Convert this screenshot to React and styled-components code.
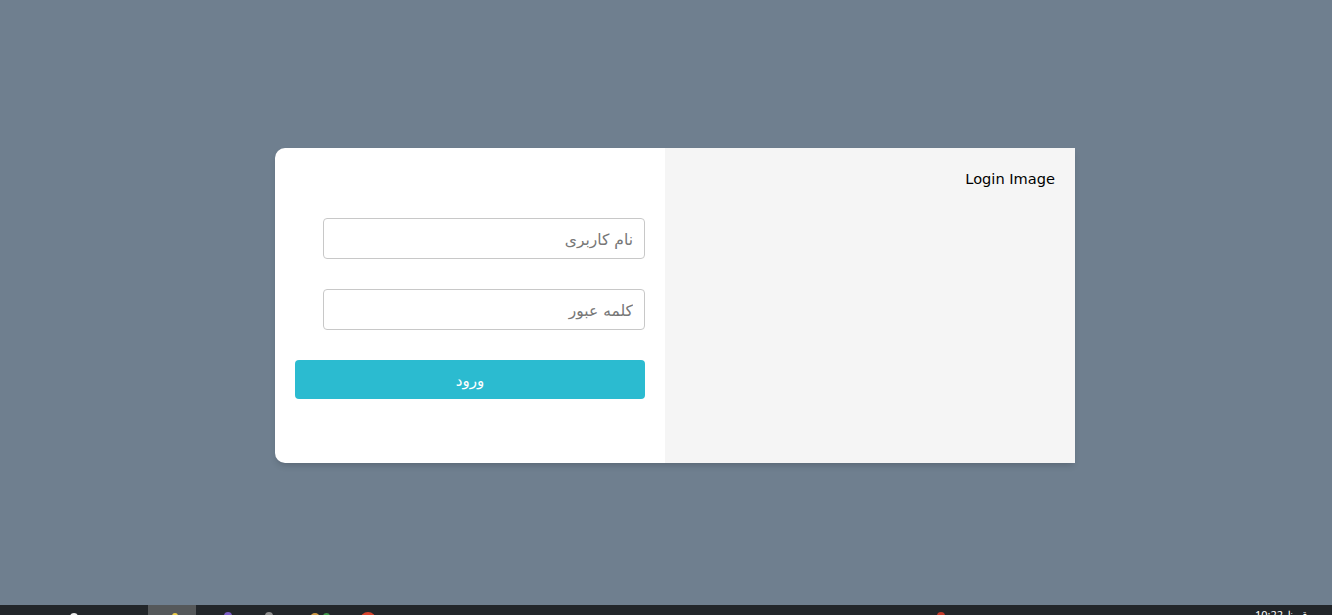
import styled, { createGlobalStyle } from "styled-components";

const GlobalStyle = createGlobalStyle`
  html, body {
    margin: 0;
    padding: 0;
    height: 100%;
    overflow: hidden;
  }
  body {
    background-color: #6f7f8f;
    font-family: "DejaVu Sans", "Noto Sans", sans-serif;
  }
`;

const App = () => {
  return (
    <>
      <GlobalStyle />
      <Page>
        <Main>
          <Card>
            <FormSide>
              <Input type="text" placeholder="نام کاربری" />
              <Input type="password" placeholder="کلمه عبور" />
              <SubmitButton type="button">ورود</SubmitButton>
            </FormSide>
            <ImageSide>Login Image</ImageSide>
          </Card>
        </Main>
        <Taskbar>
          <TaskDot $color="#f1f1f1" $left={70} $top={8} />
          <ActiveCell>
            <TaskDot $color="#f0d048" $size={6} $left={24} $top={8} />
          </ActiveCell>
          <TaskDot $color="#7a5bc4" $left={28} $top={7} />
          <TaskDot $color="#8f8f8f" $left={33} $top={7} />
          <TaskDot $color="#d09a45" $size={10} $left={37} $top={8} />
          <TaskDot $color="#3f9a4a" $size={7} $left={3} $top={8} />
          <TaskDot $color="#d8432c" $size={16} $left={30} $top={7} />
          <TaskDot $color="#c43a2a" $left={561} $top={7} />
          <Clock>10:22 ق.ظ</Clock>
        </Taskbar>
      </Page>
    </>
  );
};

export default App;

const Page = styled.div`
  height: 100vh;
  display: flex;
  flex-direction: column;
`;

const Main = styled.main`
  flex: 1;
  padding: 148px 0 0 275px;
`;

const Card = styled.div`
  display: flex;
  width: 800px;
  height: 315px;
  background: #fff;
  border-radius: 10px 0 0 10px;
  box-shadow: 0 4px 6px -2px rgba(40, 50, 60, 0.3);
  overflow: hidden;
`;

const FormSide = styled.form`
  width: 390px;
  box-sizing: border-box;
  padding: 70px 20px 0;
  display: flex;
  flex-direction: column;
  align-items: flex-end;
`;

const Input = styled.input`
  width: 322px;
  height: 41px;
  box-sizing: border-box;
  margin-bottom: 30px;
  padding: 2px 11px 0;
  border: 1px solid #c8c8c8;
  border-radius: 4px;
  direction: rtl;
  font-family: "DejaVu Sans", sans-serif;
  font-size: 15.5px;
  color: #333;
  outline: none;

  &::placeholder {
    color: #777;
    opacity: 1;
  }
`;

const SubmitButton = styled.button`
  width: 350px;
  height: 39px;
  padding: 2px 0 0;
  border: none;
  border-radius: 4px;
  background: #2bbbd0;
  color: #fff;
  font-family: "DejaVu Sans", sans-serif;
  font-size: 15px;
`;

const ImageSide = styled.div`
  width: 410px;
  box-sizing: border-box;
  padding: 21px 20px 0;
  background: #f5f5f5;
  color: #000;
  direction: rtl;
  font-family: "DejaVu Sans", sans-serif;
  font-size: 14.6px;
  line-height: 20px;
`;

const Taskbar = styled.footer`
  height: 10px;
  flex-shrink: 0;
  display: flex;
  background: #22262a;
  overflow: hidden;
`;

const ActiveCell = styled.div`
  width: 48px;
  margin-left: 70px;
  display: flex;
  background: #55585a;
`;

const TaskDot = styled.span`
  flex-shrink: 0;
  width: ${(props) => props.$size || 8}px;
  height: ${(props) => props.$size || 8}px;
  margin-top: ${(props) => props.$top}px;
  margin-left: ${(props) => props.$left}px;
  border-radius: 50%;
  background: ${(props) => props.$color};
`;

const Clock = styled.div`
  margin-left: 310px;
  color: #fff;
  font-family: "Noto Sans", sans-serif;
  font-size: 11px;
  line-height: 14px;
  padding-top: 3px;
  white-space: nowrap;
`;
